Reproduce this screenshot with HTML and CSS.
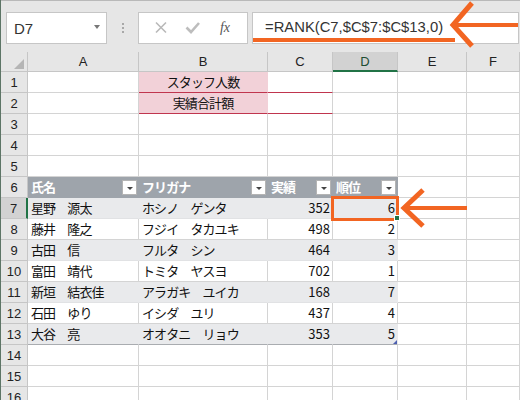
FILE: index.html
```html
<!DOCTYPE html>
<html lang="ja">
<head>
<meta charset="utf-8">
<title>RANK</title>
<link rel="stylesheet" href="styles.css">
</head>
<body>
<div class="app">
  <div class="toolbar">
    <div class="namebox"><span class="nb-text">D7</span><span class="nb-caret"></span></div>
    <div class="grip"><span></span><span></span><span></span></div>
    <div class="fbtns">
      <svg class="fb" width="22" height="14" viewBox="0 0 22 14"><path d="M6 1.5 L16 11.5 M16 1.5 L6 11.5" stroke="#b9b9b9" stroke-width="1.6" fill="none"/></svg>
      <svg class="fb" width="22" height="14" viewBox="0 0 22 14"><polyline points="4.5,6.5 9,11 17,2" stroke="#bdbdbd" stroke-width="2.6" fill="none"/></svg>
      <span class="fb fb-fx">fx</span>
    </div>
    <div class="formula">=RANK(C7,$C$7:$C$13,0)</div>
  </div>

  <div class="sheet">
    <div class="row hdr">
      <div class="corner"><span class="corner-tri"></span></div>
      <div class="ch">A</div><div class="ch">B</div><div class="ch">C</div><div class="ch ch-sel">D</div><div class="ch">E</div><div class="ch">F</div>
    </div>
    <div class="row">
      <div class="rh">1</div><div class="c"></div><div class="c pink ctr jp">スタッフ人数</div><div class="c redline"></div><div class="c"></div><div class="c"></div><div class="c"></div>
    </div>
    <div class="row">
      <div class="rh">2</div><div class="c"></div><div class="c pink ctr jp">実績合計額</div><div class="c redline"></div><div class="c"></div><div class="c"></div><div class="c"></div>
    </div>
    <div class="row">
      <div class="rh">3</div><div class="c"></div><div class="c"></div><div class="c"></div><div class="c"></div><div class="c"></div><div class="c"></div>
    </div>
    <div class="row">
      <div class="rh">4</div><div class="c"></div><div class="c"></div><div class="c"></div><div class="c"></div><div class="c"></div><div class="c"></div>
    </div>
    <div class="row">
      <div class="rh">5</div><div class="c"></div><div class="c"></div><div class="c"></div><div class="c"></div><div class="c"></div><div class="c"></div>
    </div>
    <div class="row">
      <div class="rh">6</div>
      <div class="c th jp">氏名<span class="filter"></span></div>
      <div class="c th jp">フリガナ<span class="filter"></span></div>
      <div class="c th jp">実績<span class="filter"></span></div>
      <div class="c th jp">順位<span class="filter"></span></div>
      <div class="c"></div><div class="c"></div>
    </div>
    <div class="row">
      <div class="rh rh-sel">7</div>
      <div class="c band jp">星野　源太</div><div class="c band jp">ホシノ　ゲンタ</div><div class="c band num">352</div><div class="c band num sel">6<span class="handle"></span></div><div class="c"></div><div class="c"></div>
    </div>
    <div class="row">
      <div class="rh">8</div>
      <div class="c jp">藤井　隆之</div><div class="c jp">フジイ　タカユキ</div><div class="c num">498</div><div class="c num">2</div><div class="c"></div><div class="c"></div>
    </div>
    <div class="row">
      <div class="rh">9</div>
      <div class="c band jp">古田　信</div><div class="c band jp">フルタ　シン</div><div class="c band num">464</div><div class="c band num">3</div><div class="c"></div><div class="c"></div>
    </div>
    <div class="row">
      <div class="rh">10</div>
      <div class="c jp">富田　靖代</div><div class="c jp">トミタ　ヤスヨ</div><div class="c num">702</div><div class="c num">1</div><div class="c"></div><div class="c"></div>
    </div>
    <div class="row">
      <div class="rh">11</div>
      <div class="c band jp">新垣　結衣佳</div><div class="c band jp">アラガキ　ユイカ</div><div class="c band num">168</div><div class="c band num">7</div><div class="c"></div><div class="c"></div>
    </div>
    <div class="row">
      <div class="rh">12</div>
      <div class="c jp">石田　ゆり</div><div class="c jp">イシダ　ユリ</div><div class="c num">437</div><div class="c num">4</div><div class="c"></div><div class="c"></div>
    </div>
    <div class="row">
      <div class="rh">13</div>
      <div class="c band last jp">大谷　亮</div><div class="c band last jp">オオタニ　リョウ</div><div class="c band last num">353</div><div class="c band last num">5<span class="resize"></span></div><div class="c"></div><div class="c"></div>
    </div>
    <div class="row">
      <div class="rh">14</div><div class="c"></div><div class="c"></div><div class="c"></div><div class="c"></div><div class="c"></div><div class="c"></div>
    </div>
    <div class="row">
      <div class="rh">15</div><div class="c"></div><div class="c"></div><div class="c"></div><div class="c"></div><div class="c"></div><div class="c"></div>
    </div>
    <div class="row">
      <div class="rh">16</div><div class="c"></div><div class="c"></div><div class="c"></div><div class="c"></div><div class="c"></div><div class="c"></div>
    </div>
  </div>

  <svg class="marks" width="520" height="400" viewBox="0 0 520 400" aria-hidden="true">
    <rect x="253" y="38" width="202" height="4" fill="#f26522"/>
    <polyline points="472,3 453,25 472,46" fill="none" stroke="#f26522" stroke-width="5"/>
    <rect x="456" y="23" width="62" height="4" fill="#f26522"/>
    <rect x="332.5" y="197.5" width="65" height="22" fill="none" stroke="#f26522" stroke-width="3"/>
    <polyline points="423,190 404,208 423,226" fill="none" stroke="#f26522" stroke-width="5"/>
    <rect x="407" y="206" width="60" height="4" fill="#f26522"/>
  </svg>
</div>
</body>
</html>
```

FILE: styles.css
```css
html, body {
  margin: 0;
  padding: 0;
}
body {
  width: 520px;
  height: 400px;
  overflow: hidden;
  background: #ffffff;
  font-family: "Liberation Sans", Arial, sans-serif;
}
.app {
  position: relative;
  width: 520px;
  height: 400px;
  overflow: hidden;
  box-sizing: border-box;
  border-left: 1px solid #5d7566;
  background: #e6e6e6;
}
.toolbar {
  display: flex;
  align-items: stretch;
  height: 52px;
  box-sizing: border-box;
  border-top: 1px solid #b9b9b9;
  padding: 11px 1px 8px 5px;
  background: #e6e6e6;
}
.namebox {
  width: 101px;
  box-sizing: border-box;
  background: #fff;
  border: 1px solid #c6c6c6;
  display: flex;
  align-items: center;
  justify-content: space-between;
  padding: 0 6px 0 7px;
}
.nb-text {
  font-size: 15px;
  color: #333;
}
.nb-caret {
  width: 0;
  height: 0;
  border-left: 3.5px solid transparent;
  border-right: 3.5px solid transparent;
  border-top: 4px solid #777;
  margin-bottom: 3px;
}
.grip {
  width: 31px;
  display: flex;
  flex-direction: column;
  align-items: center;
  justify-content: center;
  gap: 2px;
}
.grip span {
  width: 2px;
  height: 2px;
  background: #a8a8a8;
}
.fbtns {
  width: 110px;
  box-sizing: border-box;
  background: #fff;
  border: 1px solid #c6c6c6;
  display: flex;
  align-items: center;
  justify-content: space-around;
  padding: 0 6px;
}
.fb {
  width: 22px;
  text-align: center;
  display: block;
}
.fb-fx {
  font-family: "Liberation Serif", "Times New Roman", serif;
  font-style: italic;
  font-size: 14px;
  color: #555;
}
.formula {
  flex: 1;
  margin-left: 4px;
  box-sizing: border-box;
  background: #fff;
  border: 1px solid #c6c6c6;
  display: flex;
  align-items: center;
  padding: 0 0 2px 12px;
  font-size: 14.8px;
  color: #333;
  white-space: nowrap;
}

.sheet {
  display: flex;
  flex-direction: column;
  background: #fff;
}
.row {
  display: grid;
  grid-template-columns: 27px 111px 129px 65px 65px 69px 1fr;
  height: 21px;
}
.row.hdr {
  height: 20px;
  background: #e6e6e6;
}
.corner {
  position: relative;
  background: #e6e6e6;
  border-right: 1px solid #c6c6c6;
  border-bottom: 1px solid #c6c6c6;
  box-sizing: border-box;
}
.corner-tri {
  position: absolute;
  right: 3px;
  bottom: 2px;
  width: 0;
  height: 0;
  border-left: 10px solid transparent;
  border-bottom: 10px solid #b5b5b5;
}
.ch {
  box-sizing: border-box;
  border-right: 1px solid #c6c6c6;
  border-bottom: 1px solid #c6c6c6;
  display: flex;
  align-items: center;
  justify-content: center;
  font-size: 13px;
  color: #222;
}
.ch-sel {
  background: #d2d2d2;
  border-bottom: 2px solid #217346;
  color: #1d4d33;
}
.rh {
  box-sizing: border-box;
  background: #e6e6e6;
  border-right: 1px solid #c6c6c6;
  border-bottom: 1px solid #c6c6c6;
  display: flex;
  align-items: center;
  justify-content: center;
  font-size: 13px;
  color: #222;
}
.rh-sel {
  background: #d2d2d2;
  border-right: 2px solid #217346;
}
.c {
  position: relative;
  box-sizing: border-box;
  border-right: 1px solid #d4d4d4;
  border-bottom: 1px solid #d4d4d4;
  display: flex;
  align-items: center;
  padding: 0 3px 1px 3px;
  font-size: 13px;
  color: #111;
  white-space: nowrap;
  overflow: visible;
}
.jp {
  font-family: "Noto Sans CJK JP", "Noto Sans", sans-serif;
  font-size: 13px;
  letter-spacing: -0.9px;
}
.num {
  justify-content: flex-end;
  font-family: "Noto Sans CJK JP", "Noto Sans", sans-serif;
  font-size: 13px;
  padding-right: 2px;
}
.ctr {
  justify-content: center;
}
.pink {
  background: #f2d1d8;
  border-bottom: 1px solid #c0354e;
  border-right-color: #f2d1d8;
}
.redline {
  border-bottom: 1px solid #c0354e;
}
.th {
  background: #9ea4ab;
  border-right-color: #9ea4ab;
  border-bottom-color: #9ea4ab;
  color: #fff;
  font-weight: bold;
}
.filter {
  position: absolute;
  right: 1px;
  bottom: 2px;
  width: 15px;
  height: 15px;
  box-sizing: border-box;
  background: #fff;
  border: 1px solid #b4b4b4;
}
.filter::after {
  content: "";
  position: absolute;
  left: 4px;
  top: 6px;
  width: 0;
  height: 0;
  border-left: 3px solid transparent;
  border-right: 3px solid transparent;
  border-top: 3px solid #444;
}
.band {
  background: #e9eaec;
  border-right-color: #e9eaec;
  border-bottom-color: #e1e2e4;
}
.last {
  border-bottom: 1px solid #a9acb0;
}
.sel {
  overflow: visible;
}
.handle {
  position: absolute;
  right: -3px;
  bottom: -3px;
  width: 4px;
  height: 4px;
  background: #217346;
  border: 1px solid #fff;
  z-index: 2;
}
.resize {
  position: absolute;
  right: 0;
  bottom: 0;
  width: 0;
  height: 0;
  border-left: 4px solid transparent;
  border-bottom: 4px solid #4c5fb0;
}
.marks {
  position: absolute;
  left: -1px;
  top: 0;
  pointer-events: none;
}
```
